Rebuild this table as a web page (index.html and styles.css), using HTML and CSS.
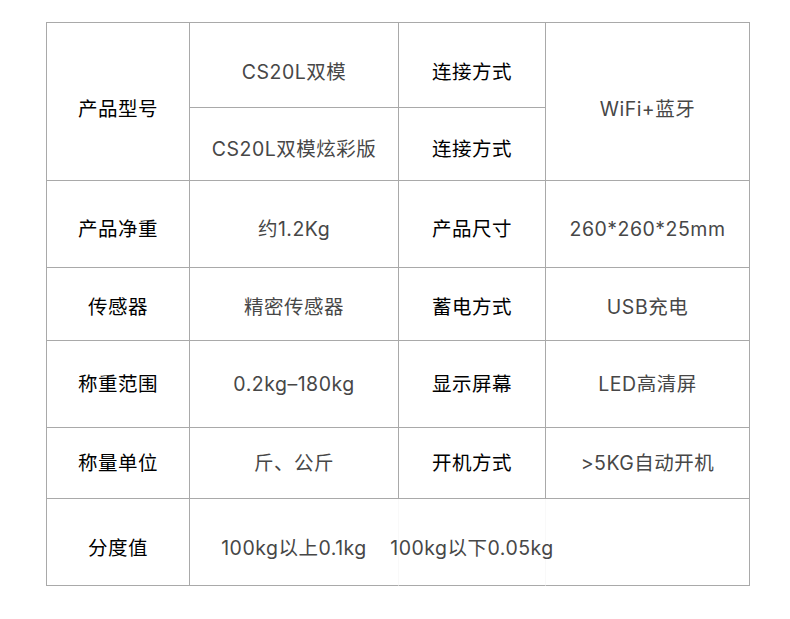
FILE: index.html
```html
<!DOCTYPE html>
<html lang="zh-CN">
<head>
<meta charset="utf-8">
<title>产品参数</title>
<link rel="stylesheet" href="styles.css">
</head>
<body>
<div class="spec">
  <div class="cell label span2 r1">产品型号</div>
  <div class="cell value ra">CS20L双模</div>
  <div class="cell label ra">连接方式</div>
  <div class="cell value span2 r1">WiFi+蓝牙</div>
  <div class="cell value rb">CS20L双模炫彩版</div>
  <div class="cell label rb">连接方式</div>

  <div class="cell label r2">产品净重</div>
  <div class="cell value r2">约1.2Kg</div>
  <div class="cell label r2">产品尺寸</div>
  <div class="cell value r2">260*260*25mm</div>

  <div class="cell label r3">传感器</div>
  <div class="cell value r3">精密传感器</div>
  <div class="cell label r3">蓄电方式</div>
  <div class="cell value r3">USB充电</div>

  <div class="cell label r4">称重范围</div>
  <div class="cell value r4">0.2kg–180kg</div>
  <div class="cell label r4">显示屏幕</div>
  <div class="cell value r4">LED高清屏</div>

  <div class="cell label r5">称量单位</div>
  <div class="cell value r5">斤、公斤</div>
  <div class="cell label r5">开机方式</div>
  <div class="cell value r5">&gt;5KG自动开机</div>

  <div class="cell label r6">分度值</div>
  <div class="cell value r6 ghost">100kg以上0.1kg</div>
  <div class="cell value r6 ghost">100kg以下0.05kg</div>
  <div class="cell value r6"></div>
</div>
</body>
</html>
```
FILE: styles.css
```css
html, body {
  margin: 0;
  padding: 0;
  background: #ffffff;
}
body {
  font-family: Inter, "Noto Sans CJK SC", sans-serif;
}
.spec {
  display: grid;
  grid-template-columns: 143px 209px 147px 204px;
  grid-template-rows: 85px 73px 87px 73px 87px 71px 87px;
  width: 703px;
  margin: 22px 0 0 46px;
  border-top: 1px solid #a9a9a9;
  border-left: 1px solid #a9a9a9;
}
.cell {
  display: flex;
  align-items: center;
  justify-content: center;
  border-right: 1px solid #a9a9a9;
  border-bottom: 1px solid #a9a9a9;
  font-size: 19.5px;
  letter-spacing: 0.5px;
  line-height: 24px;
  white-space: nowrap;
  box-sizing: border-box;
}
.label {
  color: #000000;
  font-weight: 400;
}
.value {
  color: #474747;
  font-weight: 400;
}
.span2 {
  grid-row: span 2;
}
.ghost {
  border-right-color: #f9f9f9;
}
.r1 { padding-top: 14px; }
.ra { padding-top: 13px; }
.rb { padding-top: 9px; }
.r2 { padding-top: 9px; }
.r3 { padding-top: 5px; }
.r4 { padding-top: 0; }
.r5 { padding-top: 0; }
.r6 { padding-top: 11px; }
```
